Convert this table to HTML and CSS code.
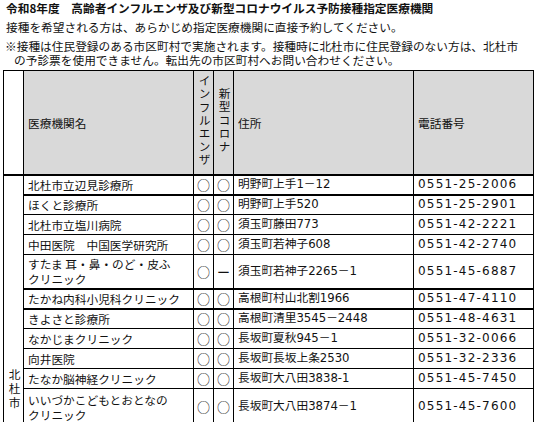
FILE: index.html
```html
<!DOCTYPE html>
<html lang="ja">
<head>
<meta charset="utf-8">
<link rel="stylesheet" href="styles.css">
</head>
<body>
<div class="page">
  <h1 class="title">令和8年度　高齢者インフルエンザ及び新型コロナウイルス予防接種指定医療機関</h1>
  <p class="lead">接種を希望される方は、あらかじめ指定医療機関に直接予約してください。</p>
  <div class="note">
    <div>※接種は住民登録のある市区町村で実施されます。接種時に北杜市に住民登録のない方は、北杜市</div>
    <div class="cont">の予診票を使用できません。転出先の市区町村へお問い合わせください。</div>
  </div>
  <table class="list">
    <colgroup>
      <col class="c-area"><col class="c-name"><col class="c-mk"><col class="c-mk"><col class="c-addr"><col class="c-tel">
    </colgroup>
    <thead>
      <tr>
        <th class="area"></th>
        <th>医療機関名</th>
        <th class="vert"><span>インフルエンザ</span></th>
        <th class="vert"><span>新型コロナ</span></th>
        <th>住所</th>
        <th>電話番号</th>
      </tr>
    </thead>
    <tbody>
      <tr class="thick">
        <td class="area" rowspan="11"><span>北杜市</span></td>
        <td>北杜市立辺見診療所</td><td class="mk">○</td><td class="mk">○</td><td class="addr">明野町上手1－12</td><td class="tel">0551-25-2006</td>
      </tr>
      <tr><td>ほくと診療所</td><td class="mk">○</td><td class="mk">○</td><td class="addr">明野町上手520</td><td class="tel">0551-25-2901</td></tr>
      <tr><td>北杜市立塩川病院</td><td class="mk">○</td><td class="mk">○</td><td class="addr">須玉町藤田773</td><td class="tel">0551-42-2221</td></tr>
      <tr><td>中田医院　中国医学研究所</td><td class="mk">○</td><td class="mk">○</td><td class="addr">須玉町若神子608</td><td class="tel">0551-42-2740</td></tr>
      <tr class="tall thick"><td class="two">すたま 耳・鼻・のど・皮ふ<br>クリニック</td><td class="mk">○</td><td class="mk">ー</td><td class="addr">須玉町若神子2265－1</td><td class="tel">0551-45-6887</td></tr>
      <tr class="thick"><td>たかね内科小児科クリニック</td><td class="mk">○</td><td class="mk">○</td><td class="addr">高根町村山北割1966</td><td class="tel">0551-47-4110</td></tr>
      <tr><td>きよさと診療所</td><td class="mk">○</td><td class="mk">○</td><td class="addr">高根町清里3545－2448</td><td class="tel">0551-48-4631</td></tr>
      <tr><td>なかじまクリニック</td><td class="mk">○</td><td class="mk">○</td><td class="addr">長坂町夏秋945－1</td><td class="tel">0551-32-0066</td></tr>
      <tr><td>向井医院</td><td class="mk">○</td><td class="mk">○</td><td class="addr">長坂町長坂上条2530</td><td class="tel">0551-32-2336</td></tr>
      <tr><td>たなか脳神経クリニック</td><td class="mk">○</td><td class="mk">○</td><td class="addr">長坂町大八田3838-1</td><td class="tel">0551-45-7450</td></tr>
      <tr class="tall last"><td class="two">いいづかこどもとおとなの<br>クリニック</td><td class="mk">○</td><td class="mk">○</td><td class="addr">長坂町大八田3874－1</td><td class="tel">0551-45-7600</td></tr>
    </tbody>
  </table>
</div>
</body>
</html>
```

FILE: styles.css
```css
html, body {
  margin: 0;
  padding: 0;
  background: #fff;
}

body {
  font-family: "Noto Sans CJK JP", "Noto Sans", sans-serif;
  font-size: 11.7px;
  color: #111;
}

.page {
  padding: 1px 0 0 3px;
  width: 535px;
}

.title {
  margin: 0;
  padding: 0 0 0 3px;
  font-size: 11.7px;
  line-height: 14px;
  font-weight: bold;
}

.lead {
  margin: 5px 0 0;
  padding-left: 3px;
  line-height: 14px;
}

.note {
  margin-top: 5px;
  padding-left: 2px;
  line-height: 13.5px;
}

.note .cont {
  padding-left: 9px;
}

.list {
  margin-top: 4px;
  border-collapse: collapse;
  table-layout: fixed;
  width: 530px;
}

.c-area { width: 20px; }
.c-name { width: 170px; }
.c-mk { width: 20px; }
.c-addr { width: 180px; }
.c-tel { width: 120px; }

.list th,
.list td {
  border: 1px solid #000;
  padding: 0 0 0 4px;
  text-align: left;
  font-weight: normal;
  white-space: nowrap;
  overflow: hidden;
}

.list thead tr {
  height: 104px;
}

.list th {
  background: #d9d9d9;
  border-bottom: 2px solid #000;
}

.list th.area {
  background: #fff;
}

.list th.vert {
  padding: 0;
  text-align: center;
  vertical-align: middle;
}

.list th.vert span {
  writing-mode: vertical-rl;
  text-orientation: upright;
  letter-spacing: 1.5px;
  line-height: 20px;
  display: inline-block;
}

.list tbody tr {
  height: 20px;
}

.list tbody tr.tall {
  height: 34px;
}

.list tbody tr.last {
  height: 36px;
}

.list tbody tr.thick td {
  border-bottom: 2px solid #000;
}

.list td {
  line-height: 15px;
}

.list td.two {
  line-height: 15px;
}

.list td.mk {
  padding: 0;
  text-align: center;
  font-size: 13px;
}

.list td.addr {
  font-family: "DejaVu Sans", "Noto Sans CJK JP", sans-serif;
  font-size: 11.7px;
}

.list td.area {
  padding: 0 0 12px;
  text-align: center;
  vertical-align: bottom;
  border-bottom: 1px solid #000;
}

.list tbody tr.thick td.area {
  border-bottom: 1px solid #000;
}

.list td.area span {
  writing-mode: vertical-rl;
  text-orientation: upright;
  letter-spacing: 2px;
  line-height: 20px;
  display: inline-block;
}

.list td.tel {
  font-family: "DejaVu Sans", "Noto Sans CJK JP", sans-serif;
  letter-spacing: 1.2px;
  font-size: 12px;
}
```
